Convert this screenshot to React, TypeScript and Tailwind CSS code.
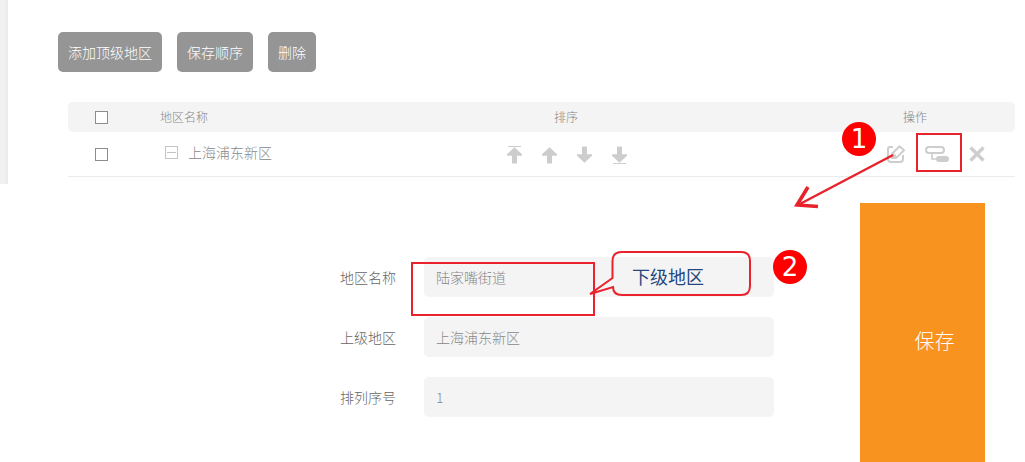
import React from "react";

const cell = "p-0 font-light";

function ArrowIcon({ down, line }: { down?: boolean; line?: boolean }) {
  return (
    <svg width="15" height="18" viewBox="0 0 15 18" fill="#cdcdcd" className="block">
      <g transform={down ? "rotate(180 7.5 9)" : undefined}>
        <path d="M7.5 1.2 L15 8.2 V9.8 H10 V17 Q10 17.6 9.4 17.6 H5.6 Q5 17.6 5 17 V9.8 H0 V8.2 Z" />
        {line && <path d="M1 0 H14 V1 H1 Z" />}
      </g>
    </svg>
  );
}

function EditIcon() {
  return (
    <svg width="18" height="18" viewBox="0 0 18 18" fill="none" stroke="#cdcdcd" strokeWidth="2" strokeLinejoin="round">
      <path d="M6 2 H3 Q1 2 1 4 V14 Q1 17 4 17 H13 Q16 17 16 14 V10" />
      <path d="M12.5 1.2 L17 5.3 L9.5 12.6 L5 13 L5.6 8.2 Z" />
      <path d="M5.6 8.2 L9.5 12.6 L5 13 Z" fill="#cdcdcd" />
    </svg>
  );
}

function ChildIcon() {
  return (
    <svg width="24" height="17" viewBox="0 0 24 17" fill="none" stroke="#cdcdcd">
      <rect x="1" y="1" width="18" height="6" rx="3" strokeWidth="2" />
      <path d="M7 7 V13 H12" strokeWidth="1.6" />
      <rect x="11" y="10" width="13" height="6" rx="3" fill="#cdcdcd" stroke="none" />
    </svg>
  );
}

function CloseIcon() {
  return (
    <svg width="16" height="16" viewBox="0 0 16 16" fill="none" stroke="#cdcdcd" strokeWidth="3.2">
      <path d="M1.5 1.5 L14.5 14.5 M14.5 1.5 L1.5 14.5" />
    </svg>
  );
}

function Check({ label }: { label: string }) {
  return (
    <input
      type="checkbox"
      aria-label={label}
      className="mx-auto block size-[13px] appearance-none border border-[#8c8c8c] bg-white checked:bg-[#8c8c8c]"
    />
  );
}

function Field({ id, label, value }: { id: string; label: string; value: string }) {
  return (
    <div className="flex items-center gap-7">
      <label htmlFor={id} className="w-14 whitespace-nowrap text-[#666666]">
        {label}
      </label>
      <input
        id={id}
        defaultValue={value}
        className="h-10 w-[350px] rounded-[5px] bg-[#f4f4f4] px-3 font-light text-[#888888] outline-none"
      />
    </div>
  );
}

function Badge({ n, place }: { n: number; place: string }) {
  return (
    <span
      className={`absolute flex size-[34px] items-center justify-center rounded-full bg-[#fe0000] font-['DejaVu_Sans',sans-serif] text-[26px] leading-none font-normal text-white ${place}`}
    >
      {n}
    </span>
  );
}

function Annotations() {
  return (
    <div className="pointer-events-none absolute inset-0">
      <div className="absolute top-[133px] left-[916px] h-[39px] w-[46px] border-2 border-[#e7222b]" />
      <div className="absolute top-[262px] left-[411px] h-[54px] w-[184px] border-2 border-[#ea222d]" />
      <svg className="absolute top-[150px] left-[790px]" width="110" height="62" fill="none" stroke="#e7222b">
        <path d="M103 5 L8 55" strokeWidth="2.4" />
        <path d="M18 37 L7 55 L28 56.5" strokeWidth="3.6" />
      </svg>
      <svg className="absolute top-[248px] left-[584px]" width="170" height="52" fill="none" stroke="#ea222d" strokeWidth="2">
        <path d="M38 4 H157 Q166 4 166 13 V38 Q166 47 157 47 H38 Q29 47 29 39 L6 46 L28.5 30 V13 Q28.5 4 38 4 Z" />
      </svg>
      <span className="absolute top-[262px] left-[632px] text-[18px] leading-7 font-normal text-[#24477f]">
        下级地区
      </span>
      <Badge n={1} place="top-[122px] left-[842px]" />
      <Badge n={2} place="top-[250px] left-[773px]" />
    </div>
  );
}

export default function App() {
  const action =
    "h-10 cursor-pointer rounded-[5px] bg-[#959595] px-2.5 font-light whitespace-nowrap text-white";
  return (
    <main className="relative bg-white font-['Noto_Sans_CJK_SC',sans-serif] text-[14px] leading-5 font-light text-[#888888]">
      <section className="flex">
        <div className="w-2 shrink-0 bg-linear-to-r from-[#f1f1f1] from-50% to-[#ebebeb]" />
        <div className="grow pt-8 pr-2.5 pb-[7px] pl-[50px]">
          <div className="flex gap-[15px]">
            <button className={action}>添加顶级地区</button>
            <button className={action}>保存顺序</button>
            <button className={action}>删除</button>
          </div>
          <div className="mt-[30px] pl-2.5">
            <table className="w-full table-fixed border-separate border-spacing-0">
              <colgroup>
                <col className="w-[67px]" />
                <col className="w-[182px]" />
                <col />
                <col className="w-[200px]" />
              </colgroup>
              <thead>
                <tr className="h-[30px] bg-[#f4f4f4] text-[12px]">
                  <th className={`${cell} rounded-l-[5px] bg-[#f4f4f4]`}>
                    <Check label="全选" />
                  </th>
                  <th className={`${cell} pl-[25px] text-left`}>地区名称</th>
                  <th className={cell}>排序</th>
                  <th className={`${cell} rounded-r-[5px]`}>操作</th>
                </tr>
              </thead>
              <tbody>
                <tr className="h-[45px]">
                  <td className={`${cell} border-b border-[#ebebeb]`}>
                    <Check label="上海浦东新区" />
                  </td>
                  <td className={`${cell} border-b border-[#ebebeb] pb-1 pl-[30px]`}>
                    <div className="flex items-center gap-2.5">
                      <button aria-label="收起" className="flex size-[13px] items-center justify-center border border-[#c4c4c4]">
                        <span className="h-px w-[9px] bg-[#c4c4c4]" />
                      </button>
                      上海浦东新区
                    </div>
                  </td>
                  <td className={`${cell} border-b border-[#ebebeb] pt-0.5 pl-0.5`}>
                    <div className="flex justify-center gap-5">
                      <button aria-label="置顶"><ArrowIcon line /></button>
                      <button aria-label="上移"><ArrowIcon /></button>
                      <button aria-label="下移"><ArrowIcon down /></button>
                      <button aria-label="置底"><ArrowIcon down line /></button>
                    </div>
                  </td>
                  <td className={`${cell} border-b border-[#ebebeb]`}>
                    <div className="flex items-center gap-5 pl-[72px]">
                      <button aria-label="编辑"><EditIcon /></button>
                      <button aria-label="添加下级地区"><ChildIcon /></button>
                      <button aria-label="删除"><CloseIcon /></button>
                    </div>
                  </td>
                </tr>
              </tbody>
            </table>
          </div>
        </div>
      </section>

      <form className="flex justify-end gap-[86px] pt-[19px] pr-10" onSubmit={(e) => e.preventDefault()}>
        <div className="flex flex-col gap-5 pt-[54px] pb-[45px]">
          <Field id="name" label="地区名称" value="陆家嘴街道" />
          <Field id="parent" label="上级地区" value="上海浦东新区" />
          <Field id="order" label="排列序号" value="1" />
        </div>
        <button className="w-[125px] cursor-pointer bg-[#f8931f] pt-4 pl-6 text-[20px] font-light text-white">
          保存
        </button>
      </form>
      <Annotations />
    </main>
  );
}
